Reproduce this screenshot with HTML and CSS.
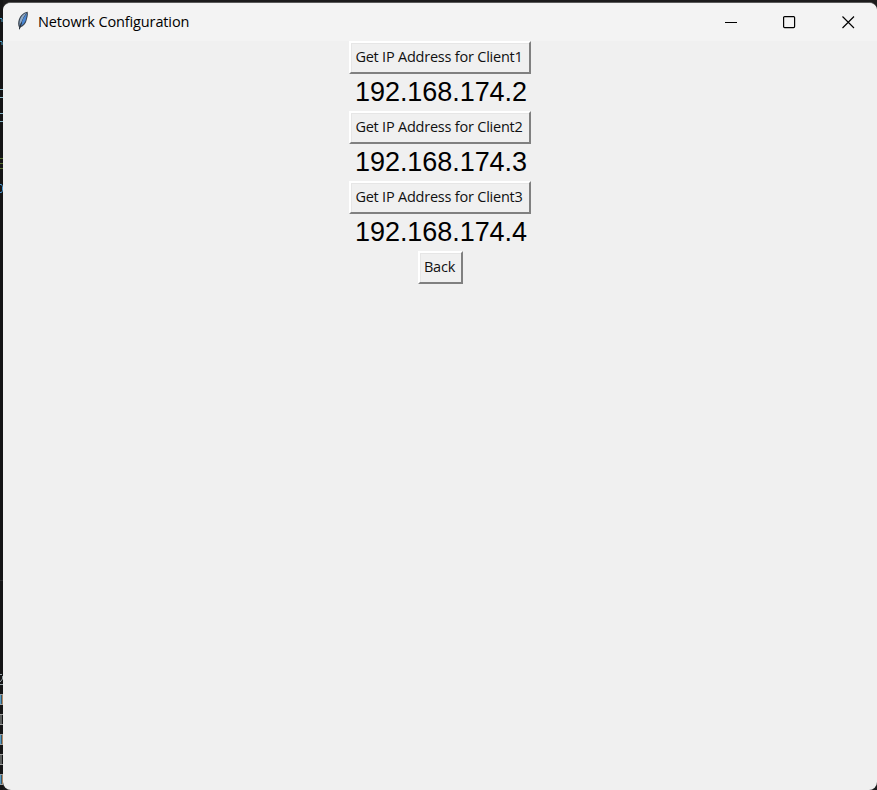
FILE: index.html
```html
<!DOCTYPE html>
<html lang="en">
<head>
<meta charset="utf-8">
<title>Netowrk Configuration</title>
<link rel="stylesheet" href="styles.css">
</head>
<body>
<svg class="backdrop" width="3" height="790" viewBox="0 0 3 790" fill="none" aria-hidden="true">
  <path d="M0 18.500h2M2 19v3M0 41.500h2M2 42v3" stroke="#4d9fc4"/>
  <path d="M0 89.500h3M0 97.500h3M0 113.500h3M0 121.500h3" stroke="#86b4c4"/>
  <path d="M0 158.500h3M0 163.500h3M0 168.500h3" stroke="#5b7434"/>
  <path d="M0 184.500h1.500l1 2v4l-1 2H0" stroke="#4f98cf"/>
  <path d="M0 580.500h3" stroke="#29292b"/>
  <path d="M0 674.500h2M2.500 676v3L0 682M0 684.500h3" stroke="#9aa5a9"/>
  <g>
    <path d="M0 694.500h3M0 704.500h3M0 714.500h3M0 724.500h3M0 734.500h3M0 744.500h3M0 754.500h3M0 764.500h3M0 774.500h3M0 784.500h3" stroke="#a0a0a0"/>
    <path d="M.5 695v9M.5 735v9M.5 775v9" stroke="#5c9cc0" stroke-width="2"/>
    <path d="M1 715v9M1 755v9" stroke="#a5aaa6"/>
    <path d="M2.500 695v9M2.500 735v9M2.500 775v9" stroke="#b08863"/>
  </g>
</svg>
<main class="window">
  <header class="titlebar">
    <svg class="feather" width="12" height="20" viewBox="0 0 12 20" aria-hidden="true">
      <path d="M10.700.7C7 1.200 3.200 4.300 1.900 8.300.9 11.200.8 14 2 16.200l.3 3 1-2.700C6.800 15.300 9 12.500 9.700 9c.4-1.900 1.700-4.700 1-8.300Z" fill="#3c4652"/>
      <path d="M9.500 1.800C6 3.200 3.600 6 2.800 9.500c-.5 2.200-.2 4-.1 5.200L6.600 6Z" fill="#90acca"/>
      <path d="M9.900 2C9.700 5.500 8.800 10.500 6.800 12.500c-1 1-2.200 1.900-3.500 2.500L6.500 7Z" fill="#4a88d6"/>
      <path d="M4.600 11.500 2.400 18" fill="none" stroke="#26303b" stroke-width="1"/>
    </svg>
    <h1 class="title">Netowrk Configuration</h1>
    <div class="controls">
      <svg width="13" height="13" viewBox="0 0 13 13"><path d="M0 6.500h12" stroke="#000" fill="none"/></svg>
      <svg width="13" height="13" viewBox="0 0 13 13"><rect x=".6" y=".6" width="11" height="11" rx="1" stroke="#000" stroke-width="1.200" fill="none"/></svg>
      <svg width="13" height="13" viewBox="0 0 13 13"><path d="m.5.500 11.500 11.500M12 .5.500 12" stroke="#000" stroke-width="1.150" fill="none"/></svg>
    </div>
  </header>
  <section class="content">
    <button class="btn"><span>Get IP Address for Client1</span></button>
    <p class="address">192.168.174.2</p>
    <button class="btn"><span>Get IP Address for Client2</span></button>
    <p class="address">192.168.174.3</p>
    <button class="btn"><span>Get IP Address for Client3</span></button>
    <p class="address">192.168.174.4</p>
    <button class="btn btn-back"><span>Back</span></button>
  </section>
</main>
</body>
</html>
```
FILE: styles.css
```css
* { box-sizing: border-box; }
body {
  margin: 0;
  height: 790px;
  overflow: hidden;
  display: flex;
  background: #1c1b1c;
}
.backdrop { flex: none; background: #151516; }
.window {
  width: 874px;
  height: 788px;
  margin-top: 2px;
  border-top: 1px solid #5a5a5a;
  border-radius: 8px;
  background: #f0f0f0;
  overflow: hidden;
}
.titlebar {
  height: 38px;
  display: flex;
  align-items: center;
  background: #f3f3f3;
  padding-left: 14px;
}
.feather { flex: none; margin-top: -2px; }
.title {
  margin: 0 0 0 9px;
  font: 400 14.500px/20px "Open Sans", "Noto Sans", sans-serif;
  letter-spacing: -0.130px;
  color: #000;
  white-space: nowrap;
}
.controls {
  display: flex;
  gap: 45px;
  margin-left: auto;
  padding-right: 22px;
}
.controls svg { display: block; }
.controls svg:last-child { margin-left: 1px; }
.content {
  display: flex;
  flex-direction: column;
  align-items: center;
}
.btn {
  width: 182px;
  height: 33px;
  padding: 0 2px 2px 0;
  display: flex;
  align-items: center;
  justify-content: center;
  border: 2px solid;
  border-color: #fff #808080 #808080 #fff;
  border-radius: 0;
  background: #f0f0f0;
  box-shadow: inset 1px 1px #e6e6e6;
  font: 400 14.500px/20px "Open Sans", "Noto Sans", sans-serif;
  letter-spacing: -0.220px;
  color: #111;
  white-space: nowrap;
}
.btn-back { width: 45px; margin-left: 1px; }
.address {
  margin: 0;
  height: 37px;
  padding-left: 2px;
  font: 400 27px/37px "Liberation Sans", Arial, sans-serif;
  letter-spacing: -0.050px;
  color: #000;
}
```
